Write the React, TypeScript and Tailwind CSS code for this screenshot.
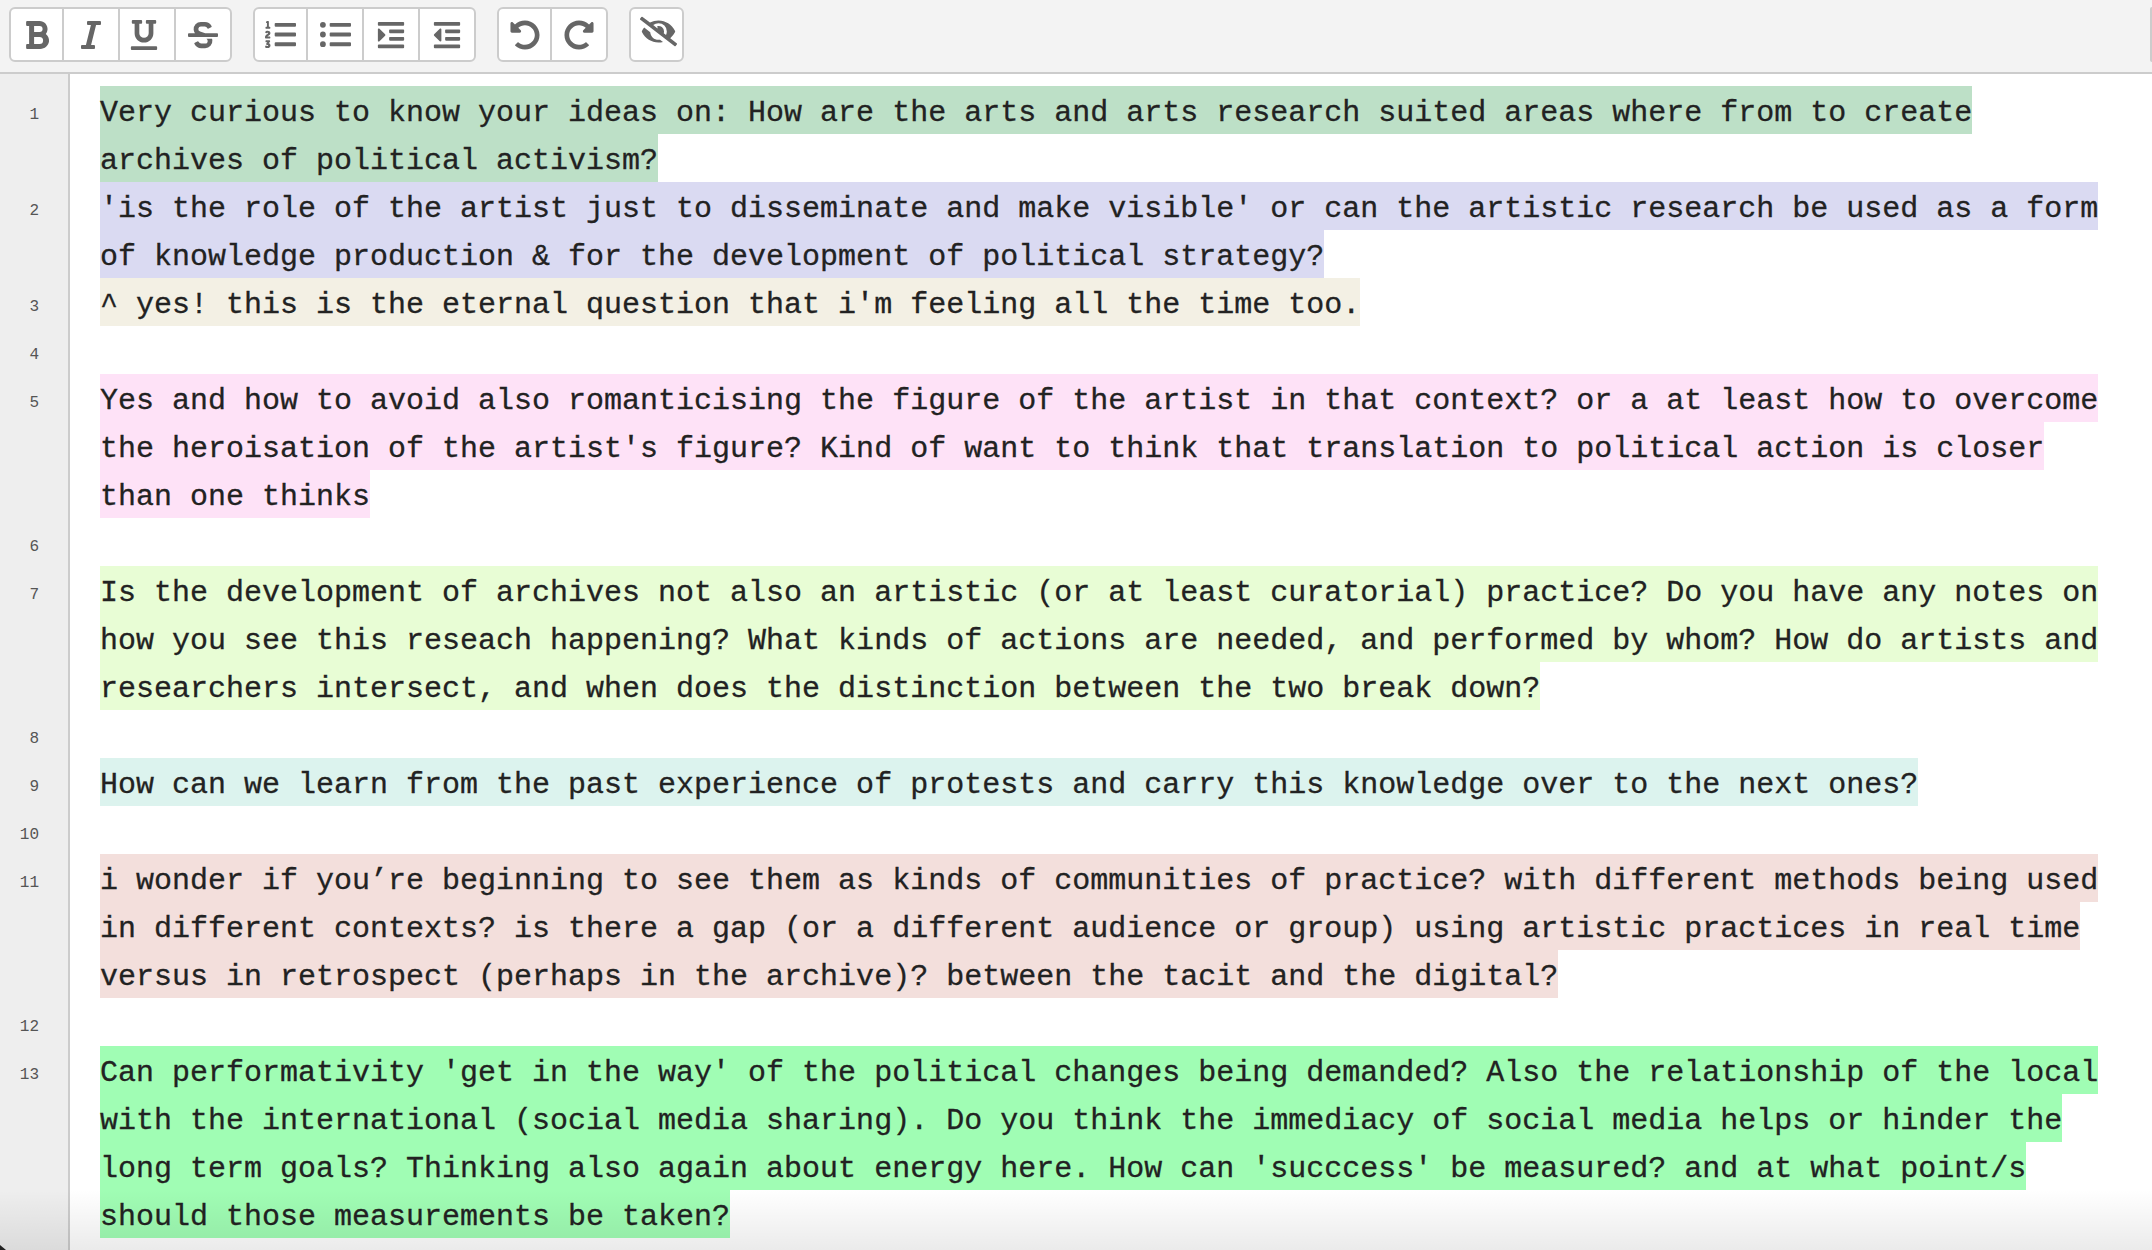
import React from 'react';
import {
  FaBold,
  FaItalic,
  FaUnderline,
  FaStrikethrough,
  FaListOl,
  FaListUl,
  FaIndent,
  FaOutdent,
  FaUndoAlt,
  FaRedoAlt,
  FaEyeSlash,
} from 'react-icons/fa';

const toolbarGroups = [
  [
    { Icon: FaBold, size: 32, nudge: '' },
    { Icon: FaItalic, size: 32, nudge: '' },
    { Icon: FaUnderline, size: 30, nudge: '-translate-x-[3px]' },
    { Icon: FaStrikethrough, size: 30, nudge: '' },
  ],
  [
    { Icon: FaListOl, size: 31, nudge: '' },
    { Icon: FaListUl, size: 31, nudge: '' },
    { Icon: FaIndent, size: 30, nudge: '' },
    { Icon: FaOutdent, size: 30, nudge: '' },
  ],
  [
    { Icon: FaUndoAlt, size: 30, nudge: '' },
    { Icon: FaRedoAlt, size: 30, nudge: '' },
  ],
  [{ Icon: FaEyeSlash, size: 37, nudge: 'translate-x-[2px] -translate-y-[3px]' }],
];

const lines: { text: string; color: string }[] = [
  {
    text: 'Very curious to know your ideas on: How are the arts and arts research suited areas where from to create archives of political activism?',
    color: 'bg-[#bde0c7]',
  },
  {
    text: "'is the role of the artist just to disseminate and make visible' or can the artistic research be used as a form of knowledge production & for the development of political strategy?",
    color: 'bg-[#dadaf2]',
  },
  {
    text: "^ yes! this is the eternal question that i'm feeling all the time too.",
    color: 'bg-[#f3f0e4]',
  },
  { text: '', color: '' },
  {
    text: "Yes and how to avoid also romanticising the figure of the artist in that context? or a at least how to overcome the heroisation of the artist's figure? Kind of want to think that translation to political action is closer than one thinks",
    color: 'bg-[#fee2f7]',
  },
  { text: '', color: '' },
  {
    text: 'Is the development of archives not also an artistic (or at least curatorial) practice? Do you have any notes on how you see this reseach happening? What kinds of actions are needed, and performed by whom? How do artists and researchers intersect, and when does the distinction between the two break down?',
    color: 'bg-[#e8fdd5]',
  },
  { text: '', color: '' },
  {
    text: 'How can we learn from the past experience of protests and carry this knowledge over to the next ones?',
    color: 'bg-[#dcf3ee]',
  },
  { text: '', color: '' },
  {
    text: 'i wonder if you’re beginning to see them as kinds of communities of practice? with different methods being used in different contexts? is there a gap (or a different audience or group) using artistic practices in real time versus in retrospect (perhaps in the archive)? between the tacit and the digital?',
    color: 'bg-[#f3dfdc]',
  },
  { text: '', color: '' },
  {
    text: "Can performativity 'get in the way' of the political changes being demanded? Also the relationship of the local with the international (social media sharing). Do you think the immediacy of social media helps or hinder the long term goals? Thinking also again about energy here. How can 'succcess' be measured? and at what point/s should those measurements be taken?",
    color: 'bg-[#a0fdb4]',
  },
];

function Toolbar() {
  return (
    <div className="flex shrink-0 h-[74px] items-start gap-[21px] border-b-2 border-[#ccc] bg-[#f3f3f3] pl-[9px] pt-[7px]">
      {toolbarGroups.map((group, i) => (
        <div key={i} className="flex h-[55px] rounded-md border-2 border-[#ccc] bg-white">
          {group.map(({ Icon, size, nudge }, j) => (
            <button
              key={j}
              className={
                j === 0
                  ? 'flex h-full w-[51px] items-center justify-center text-[#666]'
                  : 'flex h-full w-[56px] items-center justify-center border-l-2 border-[#ccc] text-[#666]'
              }
            >
              <Icon size={size} className={nudge} />
            </button>
          ))}
        </div>
      ))}
      <div className="ml-auto h-[55px] w-[2px] rounded-l-md border-l-2 border-[#ccc]" />
    </div>
  );
}

function Gutter({ label }: { label?: number }) {
  return (
    <div className="w-[70px] shrink-0 border-r-2 border-[#ccc] bg-[#eee] pr-[29px] pt-[18px] text-right text-[16px] leading-[16px] text-[#555]">
      {label}
    </div>
  );
}

export default function App() {
  return (
    <div className="relative flex h-[1250px] flex-col overflow-hidden bg-white font-['Liberation_Mono',monospace] text-[#222]">
      <Toolbar />
      <div className="flex flex-1 flex-col">
        <div className="flex h-[15px]">
          <Gutter />
        </div>
        {lines.map((line, i) => (
          <div key={i} className="flex min-h-12">
            <Gutter label={i + 1} />
            <div className="w-[2046px] pl-[30px] text-[30px] leading-[48px] [-webkit-text-stroke:0.3px_#222]">
              <span className={`${line.color} pt-[10px] pb-[4px]`}>{line.text}</span>
            </div>
          </div>
        ))}
        <div className="flex flex-1">
          <Gutter />
        </div>
      </div>
      <div className="pointer-events-none absolute inset-x-0 bottom-0 h-[60px] bg-linear-to-b from-transparent to-black/[0.08]" />
      <svg className="absolute bottom-0 left-0" width="6" height="5" viewBox="0 0 6 5">
        <path d="M0 0 L6 5 L0 5 Z" fill="#222" />
      </svg>
    </div>
  );
}
